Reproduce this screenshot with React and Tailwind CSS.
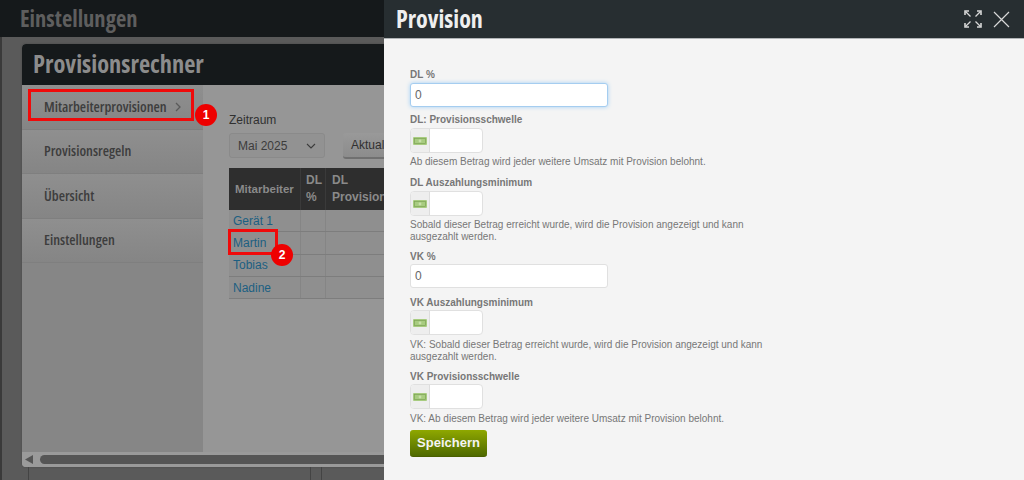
const condensed = { fontFamily: '"Open Sans", "Noto Sans", sans-serif', fontStretch: '75%' };

function Money() {
  return (
    <div className="w-[19px] h-full flex items-center justify-center bg-[#eeeeee] border-r border-[#dddddd] rounded-l-[3px] shrink-0">
      <svg width="14" height="8" viewBox="0 0 14 8">
        <rect width="14" height="8" rx="1" fill="#a8cc80" />
        <rect x="1.5" y="1.5" width="11" height="5" fill="none" stroke="#7ea356" strokeWidth="0.7" />
        <circle cx="7" cy="4" r="1.4" fill="#c9e0ab" />
      </svg>
    </div>
  );
}

function Label({ children, className = '' }) {
  return <div className={`text-[10px] leading-[12px] font-bold text-[#777777] ${className}`}>{children}</div>;
}

function Help({ children, className = '' }) {
  return <div className={`text-[10px] leading-[12px] text-[#777777] ${className}`}>{children}</div>;
}

function MoneyInput({ className = '' }) {
  return (
    <div className={`w-[73px] h-[25px] flex bg-white border border-[#e0e0e0] rounded-[4px] ${className}`}>
      <Money />
    </div>
  );
}

function TextInput({ focus, className = '' }) {
  return (
    <div className={`w-[198px] h-[24px] flex items-center pl-[4px] bg-white rounded-[3px] text-[12px] text-[#666666] border ${focus ? 'border-[#a5cdf0] shadow-[0_0_4px_#a5d0f5]' : 'border-[#e0e0e0]'} ${className}`}>
      0
    </div>
  );
}

function SideItem({ children, chevron }) {
  return (
    <div className="h-[44.5px] flex items-center pl-[22px] border-b border-[#7f7f7f] bg-gradient-to-b from-[#8f8f8f] to-[#858585] text-[14.4px] font-semibold text-[#3d3d3d]" style={condensed}>
      {children}
      {chevron && (
        <svg className="ml-[8px]" width="6" height="10" viewBox="0 0 6 10" fill="none" stroke="#5a5a5a" strokeWidth="1.3"><path d="M1 1l4 4-4 4" /></svg>
      )}
    </div>
  );
}

function Row({ name }) {
  return (
    <div className="flex h-[22.3px] border-b border-[#7d7d7d] bg-[#8f8f8f] text-[12px] text-[#1c5f82]">
      <div className="w-[72px] pl-[4px] border-r border-[#858585] flex items-center">{name}</div>
      <div className="w-[25px] border-r border-[#858585]" />
      <div className="flex-1" />
    </div>
  );
}

export default function App() {
  return (
    <div className="relative w-[1024px] h-[480px] overflow-hidden flex bg-[#5a5a5a]" style={{ fontFamily: '"Liberation Sans", Arial, sans-serif' }}>
      <div className="w-[384px] h-full flex flex-col shrink-0 overflow-hidden">
        <div className="h-[37px] bg-[#15191b] flex items-center pl-[20px] text-[22.5px] font-bold text-[#5e5e5e] shrink-0" style={condensed}>Einstellungen</div>
        <div className="flex-1 min-h-0 pl-[22px] pt-[7px] border-l-2 border-[#3a3a3a]">
          <div className="-ml-[2px] w-[400px] h-[423px] flex flex-col rounded-[4px] overflow-hidden bg-[#969696] shadow-[0_0_2px_#444444]">
            <div className="h-[41px] bg-[#15191b] flex items-center pl-[11px] text-[24.4px] font-bold text-[#8c8c8c] shrink-0" style={condensed}>Provisionsrechner</div>
            <div className="flex-1 min-h-0 flex">
              <div className="w-[181px] bg-[#868686] shrink-0">
                <SideItem chevron>Mitarbeiterprovisionen</SideItem>
                <SideItem>Provisionsregeln</SideItem>
                <SideItem>Übersicht</SideItem>
                <SideItem>Einstellungen</SideItem>
              </div>
              <div className="flex-1 pl-[26px] pt-[28px]">
                <div className="text-[12px] leading-[14px] text-[#303030]">Zeitraum</div>
                <div className="flex mt-[6px] gap-[18px]">
                  <div className="w-[96px] h-[25px] flex items-center justify-between px-[8px] bg-[#929292] border border-[#8a8a8a] rounded-[3px] text-[12px] text-[#3c3c3c]">
                    Mai 2025
                    <svg width="10" height="6" viewBox="0 0 10 6" fill="none" stroke="#3c3c3c" strokeWidth="1.1"><path d="M1 1l4 4 4-4" /></svg>
                  </div>
                  <div className="w-[80px] h-[26px] flex items-center pl-[8px] bg-gradient-to-b from-[#999999] to-[#8c8c8c] border-b-2 border-[#707070] rounded-[3px] text-[12px] text-[#303030]">Aktualisieren</div>
                </div>
                <div className="mt-[9px]">
                  <div className="flex h-[42px] bg-[#2e2e2e] text-[12px] leading-[17px] font-bold text-[#8a8a8a]">
                    <div className="w-[72px] pl-[6px] flex items-center border-r border-[#3a3a3a] text-[11.5px]">Mitarbeiter</div>
                    <div className="w-[25px] pl-[5px] flex items-center border-r border-[#3a3a3a]">DL %</div>
                    <div className="w-[70px] pl-[6px] flex items-center">DL Provision</div>
                  </div>
                  <Row name="Gerät 1" />
                  <Row name="Martin" />
                  <Row name="Tobias" />
                  <Row name="Nadine" />
                </div>
              </div>
            </div>
            <div className="h-[15px] bg-[#9a9a9a] flex items-center shrink-0 pl-[3px]">
              <svg width="8" height="9" viewBox="0 0 8 9"><path d="M0 4.5L8 0v9z" fill="#555555" /></svg>
              <div className="ml-[7px] flex-1 h-[9px] rounded-full bg-[#555555]" />
            </div>
          </div>
          <div className="flex h-[13px] ml-[4px]">
            <div className="w-[283px] border-l border-r border-[#444444]" />
            <div className="w-[11px] border-r border-[#444444]" />
          </div>
        </div>
      </div>

      <div className="w-[640px] h-full flex flex-col bg-[#f4f4f4] shrink-0">
        <div className="h-[39px] bg-[#272e31] border-b border-[#b0b4b6] flex items-center justify-between pl-[12px] pr-[14px] shrink-0">
          <span className="text-[24px] font-bold text-[#efefef]" style={condensed}>Provision</span>
          <div className="flex items-center gap-[11px]">
            <svg width="18" height="18" viewBox="0 0 18 18" fill="none" stroke="#d8d8d8" strokeWidth="1.3">
              <path d="M1.5 1.5l5 5M11.5 6.5l5-5M1.5 16.5l5-5M11.5 11.5l5 5" />
              <path d="M1 5V1h4M13 1h4v4M1 13v4h4M13 17h4v-4" fill="none" strokeWidth="1.6" />
            </svg>
            <svg width="17" height="17" viewBox="0 0 17 17" fill="none" stroke="#d8d8d8" strokeWidth="1.2"><path d="M1 1l15 15M16 1L1 16" /></svg>
          </div>
        </div>
        <div className="pl-[26px] pt-[30px]">
          <Label>DL %</Label>
          <TextInput focus className="mt-[2px]" />
          <Label className="mt-[7px]">DL: Provisionsschwelle</Label>
          <MoneyInput className="mt-[2px]" />
          <Help className="mt-[3px]">Ab diesem Betrag wird jeder weitere Umsatz mit Provision belohnt.</Help>
          <Label className="mt-[9px]">DL Auszahlungsminimum</Label>
          <MoneyInput className="mt-[2px]" />
          <Help className="mt-[3px] w-[360px]">Sobald dieser Betrag erreicht wurde, wird die Provision angezeigt und kann ausgezahlt werden.</Help>
          <Label className="mt-[8px]">VK %</Label>
          <TextInput className="mt-[1px]" />
          <Label className="mt-[9px]">VK Auszahlungsminimum</Label>
          <MoneyInput className="mt-[1px]" />
          <Help className="mt-[4px] w-[360px]">VK: Sobald dieser Betrag erreicht wurde, wird die Provision angezeigt und kann ausgezahlt werden.</Help>
          <Label className="mt-[8px]">VK Provisionsschwelle</Label>
          <MoneyInput className="mt-[1px]" />
          <Help className="mt-[4px]">VK: Ab diesem Betrag wird jeder weitere Umsatz mit Provision belohnt.</Help>
          <div className="mt-[5px] w-[77px] h-[27px] flex items-center justify-center rounded-[3px] bg-gradient-to-b from-[#8fa800] to-[#4f6a00] border-b border-[#4a5f00] text-[13px] font-bold text-[#f4f4f4]">Speichern</div>
        </div>
      </div>

      <div className="absolute left-[28px] top-[89px] w-[166px] h-[32px] border-[3px] border-[#f00a0a]" />
      <div className="absolute left-[195px] top-[104px] w-[22px] h-[22px] rounded-full bg-[#ee0000] flex items-center justify-center text-white text-[12px] font-bold">1</div>
      <div className="absolute left-[228px] top-[229px] w-[50px] h-[26px] border-[3px] border-[#f00a0a]" />
      <div className="absolute left-[271px] top-[244px] w-[22px] h-[22px] rounded-full bg-[#ee0000] flex items-center justify-center text-white text-[12px] font-bold">2</div>
    </div>
  );
}
